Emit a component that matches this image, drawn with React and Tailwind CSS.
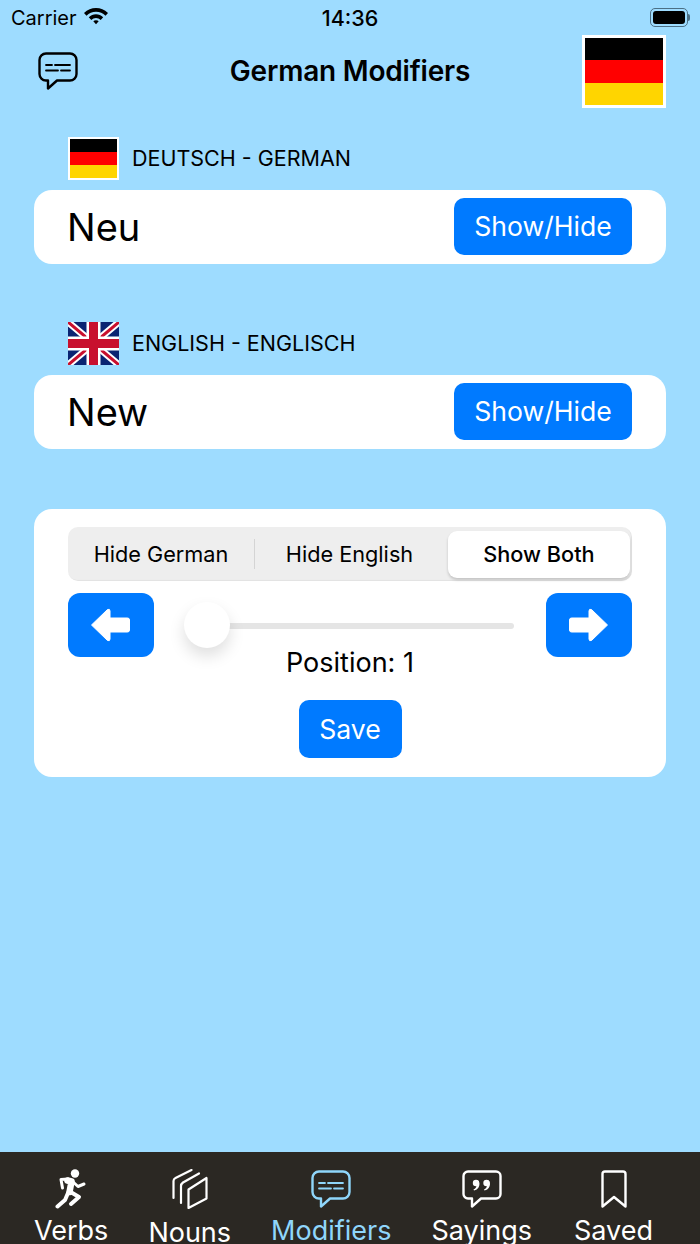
import React from 'react';

const font = { fontFamily: 'Inter, "Liberation Sans", sans-serif' };

function GermanFlag({ className }) {
  return (
    <div className={`flex flex-col bg-white shrink-0 ${className}`}>
      <div className="flex-1 bg-black" />
      <div className="flex-1 bg-[#ff0000]" />
      <div className="flex-1 bg-[#ffd500]" />
    </div>
  );
}

function UkFlag() {
  return (
    <svg width="51" height="43" viewBox="0 0 51 43" className="shrink-0">
      <rect width="51" height="43" fill="#0a2472" />
      <path d="M0 0L51 43M51 0L0 43" stroke="#fff" strokeWidth="7" />
      <path d="M0 0L51 43M51 0L0 43" stroke="#c8102e" strokeWidth="3" />
      <path d="M25.5 0V43M0 21.5H51" stroke="#fff" strokeWidth="14" />
      <path d="M25.5 0V43M0 21.5H51" stroke="#c8102e" strokeWidth="9" />
    </svg>
  );
}

function ChatLines({ color = '#000' }) {
  return (
    <svg width="40" height="38" viewBox="0 0 40 38" fill="none" stroke={color} strokeWidth="2.4" strokeLinejoin="round" strokeLinecap="round">
      <path d="M8 1.5H32A6.5 6.5 0 0 1 38.5 8V22A6.5 6.5 0 0 1 32 28.5H19L10 36.5V28.5H8A6.5 6.5 0 0 1 1.5 22V8A6.5 6.5 0 0 1 8 1.5Z" />
      <path d="M8 13H14M17 13H32M8 18.5H20M23 18.5H32" strokeWidth="1.8" />
    </svg>
  );
}

function WordCard({ word }) {
  return (
    <div className="h-[74px] rounded-[18px] bg-white flex items-center justify-between pl-[34px] pr-[34px]">
      <span className="text-[38px] text-black -ml-px">{word}</span>
      <button className="w-[178px] h-[57px] mb-px pt-px rounded-[10px] bg-[#007aff] text-white text-[26.6px]">Show/Hide</button>
    </div>
  );
}

function Arrow({ flip }) {
  return (
    <button className="w-[86px] h-[64px] rounded-[12px] bg-[#007aff] flex items-center justify-center">
      <svg width="40" height="34" viewBox="0 0 40 34" className={`${flip ? 'rotate-180' : '-translate-x-px'}`}>
        <path d="M1.500 17L17.500 1.500Q20 0.500 20 3V10H37.500Q39.500 10 39.500 12V22Q39.500 24 37.500 24H20V31Q20 33.500 17.500 32.500Z" fill="#fff" stroke="#fff" strokeLinejoin="round" />
      </svg>
    </button>
  );
}

function TabItem({ label, active, icon, labelClass = 'mt-[9px]', className = '' }) {
  return (
    <div className={`flex flex-col items-center ${className}`}>
      <div className="h-[44px] flex items-center justify-center">{icon}</div>
      <span className={`text-[27px] leading-[22px] whitespace-nowrap ${active ? 'text-[#8fd6fb]' : 'text-white'} ${labelClass}`}>{label}</span>
    </div>
  );
}

const RunIcon = (
  <svg width="32" height="40" viewBox="0 0 32 40" fill="none" stroke="#fff" strokeLinecap="round" strokeLinejoin="round">
    <circle cx="20" cy="4.500" r="4.200" fill="#fff" stroke="none" />
    <path d="M12.500 11.500L16.500 12.500L14.500 23" strokeWidth="6.500" />
    <path d="M13 10L6 10.500L7.500 19" strokeWidth="3" />
    <path d="M17 12L23 17.500L29 15" strokeWidth="3" />
    <path d="M13 24L10 31L2.500 37.500" strokeWidth="4" />
    <path d="M14 22L24 28L16 35" strokeWidth="4" />
  </svg>
);

const NounsIcon = (
  <svg width="36" height="40" viewBox="0 0 36 40" fill="none" stroke="#fff" strokeWidth="2.200" strokeLinecap="round" strokeLinejoin="round">
    <path d="M1.500 29V12Q1.500 10 3.500 9L19.500 1" />
    <path d="M9 34V17Q9 15 11 13.500L27 4.500" />
    <path d="M16.500 39V20.500L34.500 9V29.500Z" />
  </svg>
);

const SayingsIcon = (
  <svg width="40" height="38" viewBox="0 0 40 38" fill="none" stroke="#fff" strokeWidth="2.400" strokeLinejoin="round">
    <path d="M6 1.500H34A4.500 4.500 0 0 1 38.500 6V24A4.500 4.500 0 0 1 34 28.500H19L10 36.500V28.500H6A4.500 4.500 0 0 1 1.500 24V6A4.500 4.500 0 0 1 6 1.500Z" />
    <g fill="#fff" stroke="none">
      <circle cx="14" cy="13" r="3.200" />
      <path d="M14.500 10C18 10.500 18 15.500 16.500 17.500C15.500 19 14 20 12 20.500L11.500 19.500C13.500 18.500 14.500 17 14.500 15Z" />
      <circle cx="24.500" cy="13" r="3.200" />
      <path d="M25 10C28.500 10.500 28.500 15.500 27 17.500C26 19 24.500 20 22.500 20.500L22 19.500C24 18.500 25 17 25 15Z" />
    </g>
  </svg>
);

const SavedIcon = (
  <svg width="26" height="38" viewBox="0 0 26 38" fill="none" stroke="#fff" strokeWidth="2.400" strokeLinejoin="round">
    <path d="M4 1.500H22Q24.500 1.500 24.500 4V36.500L13 27L1.500 36.500V4Q1.500 1.500 4 1.500Z" />
  </svg>
);

export default function App() {
  return (
    <div className="w-[700px] h-[1244px] overflow-hidden bg-[#9edcff] flex flex-col text-black" style={font}>
      {/* status bar */}
      <div className="h-[35px] pl-3 pr-[12px] grid grid-cols-3 items-center text-[20px] leading-6">
        <div className="flex items-center gap-[6px] -ml-px">
          <span>Carrier</span>
          <svg width="26" height="20" viewBox="0 0 26 20" fill="#000" className="-mt-[3px]">
            <path d="M13 2C8.500 2 4.500 3.800 1 7L3.500 9.700C6 7.300 9.300 5.800 13 5.800S20 7.300 22.500 9.700L25 7C21.500 3.800 17.500 2 13 2Z" />
            <path d="M13 8.300C10.300 8.300 7.800 9.400 5.800 11.200L8.300 13.900C9.600 12.800 11.200 12 13 12S16.400 12.800 17.700 13.900L20.200 11.200C18.200 9.400 15.700 8.300 13 8.300Z" />
            <path d="M13 14.200C11.900 14.200 11 14.600 10.300 15.300L13 18.300L15.700 15.300C15 14.600 14.100 14.200 13 14.200Z" />
          </svg>
        </div>
        <div className="text-center font-medium text-[21.500px]">14:36</div>
        <div className="flex justify-end">
          <div className="w-[38px] h-[19px] rounded-[5px] border border-[#4b6f85] p-[2px] relative">
            <div className="w-full h-full rounded-[3px] bg-black" />
            <div className="absolute -right-[3px] top-[5px] w-[2px] h-[7px] bg-[#4b6f85] rounded-r-sm" />
          </div>
        </div>
      </div>

      {/* header */}
      <div className="h-[73px] pl-[38px] pr-[34px] flex items-center justify-between relative">
        <div className="-mt-[2px]"><ChatLines /></div>
        <h1 className="absolute left-0 right-0 text-center text-[28px] font-semibold tracking-[-0.2px] -mt-[2px]">German Modifiers</h1>
        <GermanFlag className="w-[84px] h-[73px] border-[3px] border-white" />
      </div>

      <div className="px-[34px] flex flex-col">
        {/* german */}
        <div className="mt-[29px] h-[43px] pl-[34px] flex items-center gap-[13px]">
          <GermanFlag className="w-[51px] h-[43px] border-2 border-white" />
          <span className="text-[21.500px]">DEUTSCH - GERMAN</span>
        </div>
        <div className="mt-[10px]"><WordCard word="Neu" /></div>

        {/* english */}
        <div className="mt-[58px] h-[43px] pl-[34px] flex items-center gap-[13px]">
          <UkFlag />
          <span className="text-[21.500px]">ENGLISH - ENGLISCH</span>
        </div>
        <div className="mt-[10px]"><WordCard word="New" /></div>

        {/* controls */}
        <div className="mt-[60px] h-[268px] rounded-[18px] bg-white px-[34px] pt-[18px] flex flex-col">
          <div className="h-[54px] rounded-[10px] bg-[#eeeeee] flex items-center text-[21.700px] pr-[2px] shadow-[inset_-1px_-1px_1px_rgba(0,0,0,0.05)]">
            <div className="w-[186px] text-center">Hide German</div>
            <div className="w-px h-[30px] bg-[#d4d4d4]" />
            <div className="w-[189px] text-center">Hide English</div>
            <div className="ml-[4px] w-[182px] h-[47px] rounded-[9px] bg-white shadow-[0_2px_3px_rgba(0,0,0,0.18)] flex items-center justify-center font-medium">Show Both</div>
          </div>

          <div className="mt-[12px] flex items-center justify-between">
            <Arrow />
            <div className="w-[330px] h-[46px] mr-[2px] relative flex items-center">
              <div className="ml-[8px] mt-[2px] w-[322px] h-[6px] rounded-full bg-[#e5e5e5]" />
              <div className="absolute left-0 top-0 w-[46px] h-[46px] rounded-full bg-white shadow-[0_8px_16px_rgba(0,0,0,0.13)]" />
            </div>
            <Arrow flip />
          </div>

          <div className="text-center text-[27px] leading-[34px] -mt-[11px]">Position: 1</div>

          <button className="mt-[20px] pt-px self-center w-[103px] h-[58px] rounded-[10px] bg-[#007aff] text-white text-[26.600px]">Save</button>
        </div>
      </div>

      {/* tab bar */}
      <div className="mt-auto h-[92px] bg-[#2b2823] pl-[34px] flex gap-[40px] pt-[15px] overflow-hidden">
        <TabItem label="Verbs" icon={RunIcon} />
        <TabItem label="Nouns" icon={NounsIcon} labelClass="mt-[11px]" />
        <TabItem label="Modifiers" active icon={<ChatLines color="#8fd6fb" />} />
        <TabItem label="Sayings" icon={SayingsIcon} />
        <TabItem label="Saved" icon={SavedIcon} className="ml-[2px]" />
      </div>
    </div>
  );
}
